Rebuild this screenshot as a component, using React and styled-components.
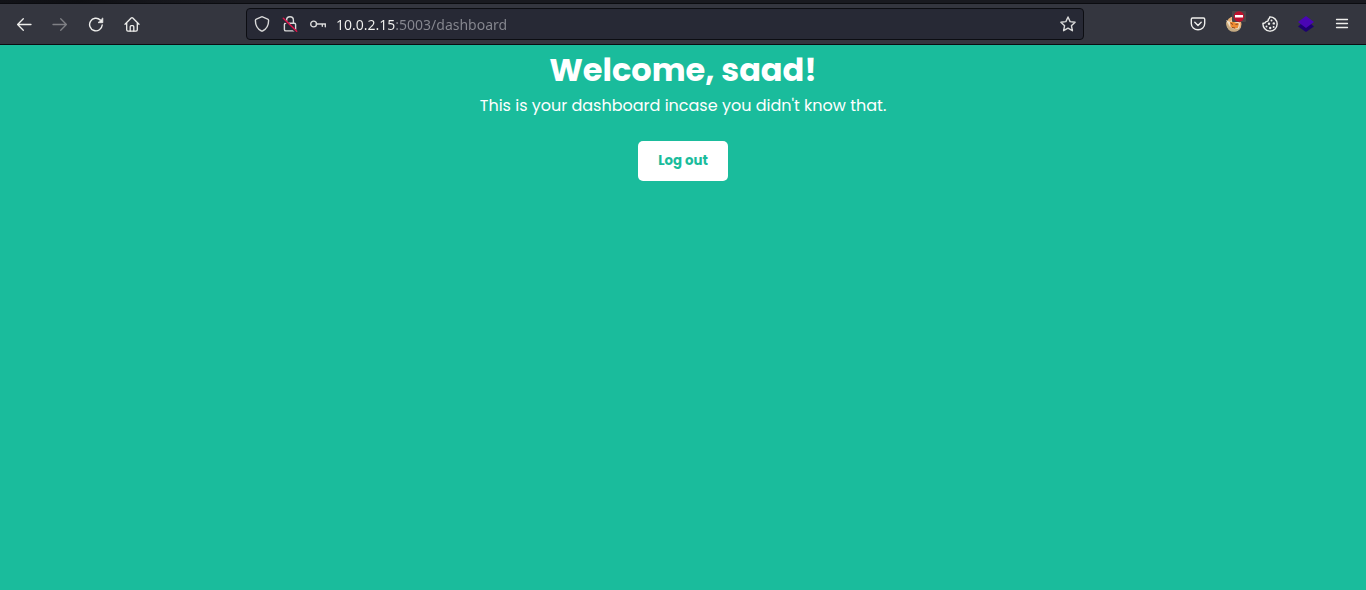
import React from "react";
import styled, { createGlobalStyle } from "styled-components";

const GlobalStyle = createGlobalStyle`
  *, *::before, *::after { box-sizing: border-box; }
  body {
    margin: 0;
    background: #1abc9c;
    color: #ffffff;
    font-family: Poppins, Inter, sans-serif;
  }
`;

const Browser = styled.div`
  display: flex;
  flex-direction: column;
  min-height: 100vh;
`;

const TabStrip = styled.div`
  height: 4px;
  background: linear-gradient(to right, #121318 0, #0e0f13 80px, #15161b 150px, #191a20 240px);
  border-bottom: 1px solid #0b0c10;
`;

const Toolbar = styled.header`
  display: flex;
  align-items: center;
  padding: 4px 6px;
  background: #34363f;
  border-bottom: 1px solid #0c0d12;
`;

const ButtonGroup = styled.nav`
  display: flex;
`;

const ToolButton = styled.button`
  display: grid;
  place-items: center;
  width: 36px;
  height: 32px;
  padding: 0;
  border: 0;
  border-radius: 4px;
  background: transparent;
  color: #eeeeec;

  &:disabled { color: #7f8085; }
`;

const AddressBar = styled.div`
  display: flex;
  flex: 1;
  align-items: center;
  min-width: 0;
  height: 32px;
  margin: 0 96px;
  padding: 0 1px;
  border: 1px solid #0c0d12;
  border-radius: 4px;
  background: #272935;
`;

const BarButton = styled.button`
  display: grid;
  flex: none;
  place-items: center;
  width: 28px;
  height: 28px;
  padding: 0;
  border: 0;
  background: transparent;
  color: #d9d9d9;
`;

const AddressInput = styled.input`
  flex: 1;
  min-width: 0;
  height: 28px;
  margin: 0;
  padding: 0 0 0 4px;
  border: 0;
  outline: 0;
  background: linear-gradient(to right, #f2f2f0 64px, #878890 64px);
  -webkit-background-clip: text;
  background-clip: text;
  color: transparent;
  font: 14px "Noto Sans", sans-serif;
`;

const Page = styled.main`
  flex: 1;
  background: #1abc9c;
  text-align: center;
`;

const Title = styled.h1`
  margin: 0;
  font-size: 32px;
  font-weight: 700;
  line-height: 50px;
`;

const Message = styled.p`
  margin: 0 0 24px;
  font-size: 16px;
  line-height: 22px;
`;

const LogoutButton = styled.button`
  height: 40px;
  padding: 0 20px;
  border: 0;
  border-radius: 5px;
  background: #ffffff;
  color: #1abc9c;
  font-family: Poppins, Inter, sans-serif;
  font-weight: 700;
`;

const Glyph = ({ children, width = 1.3 }) => (
  <svg width="16" height="16" viewBox="0 0 16 16" fill="none" stroke="currentColor" strokeWidth={width} strokeLinecap="round" strokeLinejoin="round" aria-hidden="true">
    {children}
  </svg>
);

const BackIcon = () => <Glyph><path d="M15 8.5H1.6M7.3 2.8 1.6 8.5l5.7 5.7" /></Glyph>;
const ForwardIcon = () => <Glyph><path d="M1 8.5h13.4M8.7 2.8l5.7 5.7-5.7 5.7" /></Glyph>;
const ReloadIcon = () => (
  <Glyph width={1.4}>
    <path d="M12.300 4A6.300 6.300 0 1 0 14.200 9" />
    <path d="M14.800 2.300v4.400H10.400z" fill="currentColor" strokeWidth="0.800" />
  </Glyph>
);
const HomeIcon = () => (
  <Glyph>
    <path d="M1 8.200 7.200 2q.8-.8 1.600 0L15 8.200M2.700 6.800v7q0 1.300 1.300 1.300h8q1.300 0 1.300-1.300v-7" />
    <path d="M6.200 15v-4.300q0-1 1-1h1.600q1 0 1 1V15" />
  </Glyph>
);
const ShieldIcon = () => (
  <Glyph width={1.4}><path d="M7.500.9q.5-.2 1 0l5.200 2.200q.9.400.9 1.400c0 4.200-2.200 8.600-6.100 10.500q-.5.200-1 0C3.600 13.100 1.400 8.700 1.400 4.500q0-1 .9-1.400z" /></Glyph>
);
const InsecureIcon = () => (
  <Glyph width={1.4}>
    <path d="M4.600 7V4.200a3.400 3.400 0 0 1 6.800 0V7M3.600 7.200h8.800q1.200 0 1.200 1.200v5q0 1.500-1.500 1.500H3.900q-1.500 0-1.500-1.500v-5q0-1.200 1.200-1.200z" />
    <path d="M1.700 3.500 13.300 14.800" stroke="#272935" strokeWidth="2.400" />
    <path d="M1.300 2.300 14.700 15.200" stroke="#df144b" strokeWidth="1.500" />
  </Glyph>
);
const KeyIcon = () => (
  <Glyph width={1.4}><circle cx="3.600" cy="8" r="2.900" /><path d="M6.500 8h9M12.300 8v2.200M15.300 8v2.700" /></Glyph>
);
const StarIcon = () => (
  <Glyph width={1.4}><path d="m8 1 2.100 4.600 5 .6-3.700 3.500 1 5L8 12.200l-4.400 2.500 1-5L.900 6.200l5-.6z" /></Glyph>
);
const PocketIcon = () => (
  <Glyph width={1.4}><path d="M2.500 2h11q1.200 0 1.200 1.200V7.500A6.700 6.300 0 0 1 1.300 7.500V3.200Q1.300 2 2.500 2zM4.800 6.300 8 9.400l3.200-3.100" /></Glyph>
);
const FoxyIcon = () => (
  <svg width="24" height="26" viewBox="0 0 24 26" aria-hidden="true">
    <circle cx="12" cy="13" r="7.500" fill="#e8b276" />
    <path d="M4.200 10q-1 7.500 5 10.500h5q4-1.500 5-5l-3 1.500-4 .3-5-1.500z" fill="#c3ab84" />
    <path d="m4 9 4 2 4-4 6 5.500-1 5-5 .8-4-2.500z" fill="#f0e4cd" />
    <path d="m8 11 3-.5 2 1 4 1-1 4.200-3 1-4.300-1.500z" fill="#ed8b32" />
    <path d="m8.500 12 2.500 1.500m2.500 0 2.500-.5M10 16.500l3 .5" stroke="#8e4c25" strokeWidth="1" />
    <rect x="10" y="0" width="14" height="11" rx="1" fill="#4a4748" />
    <circle cx="17" cy="5.500" r="5.200" fill="#be102d" />
    <path d="M13 4h8v2.500h-8z" fill="#fff" />
  </svg>
);
const CookieIcon = () => (
  <Glyph width={1.4}>
    <path d="M7.700.9A7.100 7.100 0 1 1 1 7.100q2.400.5 3-1.500 2.600-.2 2.300-2.300Q7.700 2.500 7.700.9z" />
    <g fill="currentColor" stroke="none"><circle cx="9.500" cy="4.500" r="1" /><circle cx="7" cy="7.800" r="1.200" /><circle cx="11.800" cy="7.400" r="1.200" /><circle cx="4.500" cy="10.500" r="1" /><circle cx="8.200" cy="12" r="1.200" /><circle cx="11.600" cy="11" r="1" /></g>
  </Glyph>
);
const LayersIcon = () => (
  <svg width="16" height="16" viewBox="0 0 16 16" aria-hidden="true">
    <path d="M0 10.400 3 8h10l3 2.400L8 16z" fill="#1d0071" />
    <path d="m8 0 8 6-8 6-8-6z" fill="#4905b5" />
  </svg>
);
const MenuIcon = () => <Glyph width={1.3}><path d="M2.500 3.500h11M2.500 7.500h11M2.500 11.500h11" /></Glyph>;

export default function App() {
  return (
    <>
      <GlobalStyle />
      <Browser>
        <TabStrip />
        <Toolbar>
          <ButtonGroup aria-label="Navigation">
            <ToolButton aria-label="Back"><BackIcon /></ToolButton>
            <ToolButton aria-label="Forward" disabled><ForwardIcon /></ToolButton>
            <ToolButton aria-label="Reload"><ReloadIcon /></ToolButton>
            <ToolButton aria-label="Home"><HomeIcon /></ToolButton>
          </ButtonGroup>
          <AddressBar>
            <BarButton aria-label="Tracking protection"><ShieldIcon /></BarButton>
            <BarButton aria-label="Connection not secure"><InsecureIcon /></BarButton>
            <BarButton aria-label="Saved logins"><KeyIcon /></BarButton>
            <AddressInput type="text" aria-label="Address" defaultValue="10.0.2.15:5003/dashboard" spellCheck={false} />
            <BarButton aria-label="Bookmark this page"><StarIcon /></BarButton>
          </AddressBar>
          <ButtonGroup aria-label="Extensions">
            <ToolButton aria-label="Save to Pocket"><PocketIcon /></ToolButton>
            <ToolButton aria-label="Proxy disabled"><FoxyIcon /></ToolButton>
            <ToolButton aria-label="Cookie editor"><CookieIcon /></ToolButton>
            <ToolButton aria-label="Layers"><LayersIcon /></ToolButton>
            <ToolButton aria-label="Open application menu"><MenuIcon /></ToolButton>
          </ButtonGroup>
        </Toolbar>
        <Page>
          <Title>Welcome, saad!</Title>
          <Message>This is your dashboard incase you didn't know that.</Message>
          <LogoutButton>Log out</LogoutButton>
        </Page>
      </Browser>
    </>
  );
}
